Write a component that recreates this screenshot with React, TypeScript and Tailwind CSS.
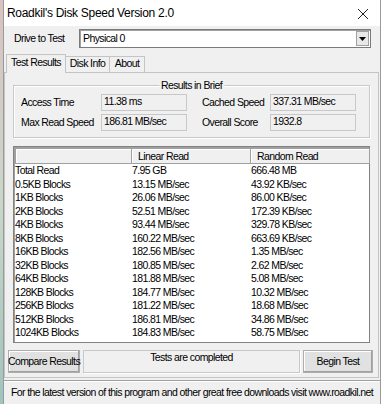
const rows: [string, string, string][] = [
  ['Total Read', '7.95 GB', '666.48 MB'],
  ['0.5KB Blocks', '13.15 MB/sec', '43.92 KB/sec'],
  ['1KB Blocks', '26.06 MB/sec', '86.00 KB/sec'],
  ['2KB Blocks', '52.51 MB/sec', '172.39 KB/sec'],
  ['4KB Blocks', '93.44 MB/sec', '329.78 KB/sec'],
  ['8KB Blocks', '160.22 MB/sec', '663.69 KB/sec'],
  ['16KB Blocks', '182.56 MB/sec', '1.35 MB/sec'],
  ['32KB Blocks', '180.85 MB/sec', '2.62 MB/sec'],
  ['64KB Blocks', '181.88 MB/sec', '5.08 MB/sec'],
  ['128KB Blocks', '184.77 MB/sec', '10.32 MB/sec'],
  ['256KB Blocks', '181.22 MB/sec', '18.68 MB/sec'],
  ['512KB Blocks', '186.81 MB/sec', '34.86 MB/sec'],
  ['1024KB Blocks', '184.83 MB/sec', '58.75 MB/sec'],
];

function Field({ value }: { value: string }) {
  return (
    <div className="h-[17px] w-[86px] border border-[#c8c8c8] bg-[#f0f0f0] pl-[2px] leading-[13px]">
      {value}
    </div>
  );
}

function Button({ label, className }: { label: string; className: string }) {
  return (
    <div
      className={`flex h-[23px] items-center justify-center whitespace-nowrap border border-[#adadad] bg-[#e1e1e1] shadow-[inset_-1px_-1px_0_#a0a0a0,inset_1px_1px_0_#fff] ${className}`}
    >
      {label}
    </div>
  );
}

export default function App() {
  return (
    <div className="flex h-[404px] w-[385px] overflow-hidden whitespace-nowrap bg-white font-['Liberation_Sans',Arial,sans-serif] text-[10.5px] tracking-[-0.6px] text-black">
      {/* desktop edge */}
      <div className="w-[3px] bg-gradient-to-b from-[#d9c2c0] via-[#c9d7c8] to-[#9fc4bd]" />

      {/* window */}
      <div className="flex h-[404px] w-[378px] flex-col border-x border-[#9a9a9a] bg-[#f0f0f0]">
        {/* title bar */}
        <div className="flex h-[26px] shrink-0 items-center justify-between bg-white pl-[3px] pr-[11px]">
          <span className="text-[12px] tracking-[-0.3px]">Roadkil's Disk Speed Version 2.0</span>
          <svg width="12" height="12" viewBox="0 0 12 12" className="mt-[1px]">
            <path d="M1 1 L11 11 M11 1 L1 11" stroke="#222" strokeWidth="1" fill="none" />
          </svg>
        </div>

        {/* drive selector */}
        <div className="mt-[3px] flex h-[19px] items-center pl-[10px]">
          <span className="w-[65px]">Drive to Test</span>
          <div className="flex h-[19px] w-[292px] items-center border border-[#7a7a7a] bg-white shadow-[inset_1px_1px_0_#a0a0a0]">
            <span className="flex-1 pl-[3px]">Physical 0</span>
            <div className="mr-[1px] flex h-[15px] w-[13px] items-center justify-center border border-[#a0a0a0] bg-[#e8e8e8]">
              <svg width="7" height="4" viewBox="0 0 7 4">
                <path d="M0 0 H7 L3.5 4 Z" fill="#000" />
              </svg>
            </div>
          </div>
        </div>

        {/* tabs */}
        <div className="mt-[5px] flex h-[19px] items-end pl-[2px] leading-[13px]">
          <div className="relative z-10 -mb-px flex h-[19px] w-[60px] justify-center border-x border-t border-[#c4c4c4] bg-[#f0f0f0] pt-[1px]">
            Test Results
          </div>
          <div className="flex h-[16px] w-[44px] justify-center border-r border-t border-[#c4c4c4]">
            Disk Info
          </div>
          <div className="flex h-[16px] w-[35px] justify-center border-r border-t border-[#c4c4c4]">
            About
          </div>
        </div>

        {/* tab panel */}
        <div className="mr-[1px] flex h-[306px] flex-col border border-[#c4c4c4] px-[8px] pt-[12px]">
          {/* results in brief */}
          <div className="relative h-[53px] w-[357px] border border-[#c8c8c8] shadow-[inset_1px_1px_0_#fff,1px_1px_0_#fff]">
            <span className="absolute -top-[8px] left-1/2 -translate-x-1/2 bg-[#f0f0f0] px-[2px] leading-[14px]">
              Results in Brief
            </span>
            <div className="grid grid-cols-[80px_86px_15px_68px_86px] items-center gap-y-[3px] pl-[7px] pt-[8px]">
              <span>Access Time</span>
              <Field value="11.38 ms" />
              <span />
              <span>Cached Speed</span>
              <Field value="337.31 MB/sec" />
              <span>Max Read Speed</span>
              <Field value="186.81 MB/sec" />
              <span />
              <span>Overall Score</span>
              <Field value="1932.8" />
            </div>
          </div>

          {/* list view */}
          <div className="mt-[8px] h-[197px] w-[357px] border border-[#828282] bg-white shadow-[inset_1px_1px_0_#a0a0a0]">
            <div className="ml-px mt-px flex h-[16px] w-[355px]">
              <div className="w-[117px] border border-[#a0a0a0] bg-[#f0f0f0] shadow-[inset_1px_1px_0_#fff]" />
              <div className="w-[119px] border-y border-r border-[#a0a0a0] bg-[#f0f0f0] pl-[6px] leading-[14px] shadow-[inset_1px_1px_0_#fff]">
                Linear Read
              </div>
              <div className="flex-1 border-y border-r border-[#a0a0a0] bg-[#f0f0f0] pl-[6px] leading-[14px] shadow-[inset_1px_1px_0_#fff]">
                Random Read
              </div>
            </div>
            <div className="ml-[1px]">
              {rows.map(([name, linear, random]) => (
                <div key={name} className="flex h-[13.5px] items-center leading-[13px]">
                  <span className="w-[117px]">{name}</span>
                  <span className="w-[119px]">{linear}</span>
                  <span>{random}</span>
                </div>
              ))}
            </div>
          </div>

          {/* actions */}
          <div className="-mx-[5px] mt-[7px] flex items-start">
            <Button label="Compare Results" className="w-[72px]" />
            <div className="ml-[3px] flex h-[23px] w-[217px] justify-center border border-[#c8c8c8] leading-[12px] shadow-[1px_1px_0_#fff]">
              Tests are completed
            </div>
            <Button label="Begin Test" className="ml-[3px] w-[70px]" />
          </div>
        </div>

        {/* footer */}
        <div className="mt-[2px] flex h-[24px] items-center justify-center border-t border-[#a0a0a0] shadow-[inset_0_1px_0_#fff]">
          For the latest version of this program and other great free downloads visit www.roadkil.net
        </div>
      </div>
    </div>
  );
}
